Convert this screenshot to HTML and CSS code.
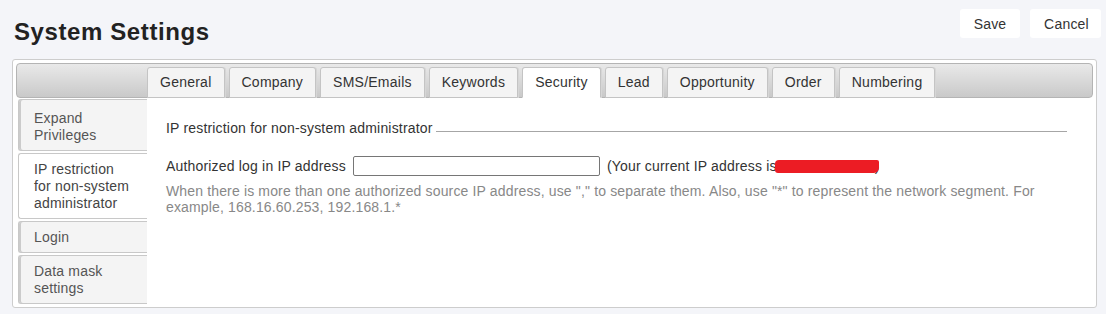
FILE: index.html
```html
<!DOCTYPE html>
<html lang="en">

<head>
    <meta charset="UTF-8">
    <title>System Settings</title>
    <link rel="stylesheet" href="styles.css">
</head>

<body>
    <div class="topbar">
        <h1 class="title">System Settings</h1>
        <div class="actions">
            <button class="btn btn-save">Save</button>
            <button class="btn btn-cancel">Cancel</button>
        </div>
    </div>

    <div class="panel">
        <div class="tabbar">
            <ul class="tabs">
                <li class="tab">General</li>
                <li class="tab">Company</li>
                <li class="tab">SMS/Emails</li>
                <li class="tab">Keywords</li>
                <li class="tab active">Security</li>
                <li class="tab">Lead</li>
                <li class="tab">Opportunity</li>
                <li class="tab">Order</li>
                <li class="tab">Numbering</li>
            </ul>
        </div>

        <div class="panel-body">
            <ul class="side-tabs">
                <li class="side-tab first">Expand<br>Privileges</li>
                <li class="side-tab active">IP restriction<br>for non-system<br>administrator</li>
                <li class="side-tab">Login</li>
                <li class="side-tab">Data mask<br>settings</li>
            </ul>

            <div class="content">
                <div class="legend">
                    <span class="legend-text">IP restriction for non-system administrator</span>
                    <span class="legend-line"></span>
                </div>

                <div class="field-row">
                    <label for="ip-address">Authorized log in IP address</label>
                    <input type="text" id="ip-address">
                    <span class="current-ip">(Your current IP address is<span class="masked"></span>)</span>
                </div>

                <p class="help">When there is more than one authorized source IP address, use "," to separate them. Also, use "*" to represent the network segment. For example, 168.16.60.253, 192.168.1.*</p>
            </div>
        </div>
    </div>
</body>

</html>
```

FILE: styles.css
```css
* {
    margin: 0;
    padding: 0;
    box-sizing: border-box;
}

body {
    font-family: 'Liberation Sans', Arial, sans-serif;
    font-size: 14px;
    letter-spacing: 0.18px;
    background-color: #f4f5f9;
    color: #333;
    width: 1106px;
    height: 314px;
    overflow: hidden;
}

ul {
    list-style: none;
}

.topbar {
    display: flex;
    justify-content: space-between;
    align-items: flex-start;
    height: 59px;
    padding: 9px 5px 0 14px;
}

.title {
    margin-top: 9px;
    font-size: 24px;
    line-height: 28px;
    font-weight: bold;
    letter-spacing: 0.6px;
    color: #222;
}

.actions {
    display: flex;
    gap: 10px;
}

.btn {
    height: 29px;
    border: none;
    border-radius: 3px;
    background-color: #fff;
    color: #333;
    font-family: 'Liberation Sans', Arial, sans-serif;
    font-size: 14px;
    letter-spacing: 0.2px;
    cursor: pointer;
}

.btn-save {
    width: 60px;
}

.btn-cancel {
    width: 71px;
    padding-left: 2px;
}

.panel {
    margin: 0 9px 0 12px;
    height: 249px;
    padding: 3px;
    border: 1px solid #cdcdcd;
    border-radius: 3px;
    background-color: #fff;
    display: flex;
    flex-direction: column;
}

.tabbar {
    height: 36px;
    border: 1px solid #b4b4b4;
    border-radius: 4px;
    background: linear-gradient(to bottom, #e9e9e9, #c9c9c9);
    padding-left: 130px;
    display: flex;
    align-items: flex-end;
}

.tabs {
    display: flex;
    gap: 4px;
    margin-bottom: -1px;
}

.tab {
    height: 31px;
    padding: 0 12px;
    line-height: 29px;
    letter-spacing: 0.24px;
    border: 1px solid #c4c4c4;
    border-radius: 3px 3px 0 0;
    background-color: #f4f4f4;
    box-shadow: 1px 0 0 #d6d6d6;
    color: #333;
}

.tab.active {
    background-color: #fff;
    border-bottom-color: #fff;
}

.panel-body {
    flex: 1;
    display: flex;
}

.side-tabs {
    width: 131px;
    padding: 1px 0 0 2px;
    display: flex;
    flex-direction: column;
    gap: 2px;
}

.side-tab {
    padding: 7px 0 6px 15px;
    line-height: 17px;
    border: 1px solid #c8c8c8;
    border-right: none;
    border-radius: 3px 0 0 3px;
    background-color: #f4f4f4;
    box-shadow: inset 2px 0 0 #cbcbcb;
    color: #555;
}

.side-tab.first {
    padding-top: 10px;
}

.side-tab.active {
    background-color: #fff;
    box-shadow: none;
    color: #444;
}

.content {
    flex: 1;
    padding: 22px 26px 0 19px;
}

.legend {
    display: flex;
    align-items: flex-start;
    line-height: 17px;
}

.legend-line {
    flex: 1;
    margin: 11px 0 0 3px;
    border-top: 1px solid #a6a6a6;
}

.field-row {
    display: flex;
    align-items: center;
    margin-top: 19px;
    height: 20px;
    line-height: 17px;
}

.field-row input {
    width: 247px;
    height: 20px;
    margin: 0 7px;
    border: 1px solid #767676;
    border-radius: 2px;
    outline: none;
}

.current-ip {
    display: flex;
    align-items: center;
}

.masked {
    display: inline-block;
    width: 104px;
    height: 13px;
    margin-left: -2px;
    margin-right: -4px;
    background-color: #ec1c24;
    border-radius: 4px 2px 5px 3px;
    position: relative;
}

.help {
    margin-top: 7px;
    line-height: 16px;
    color: #888;
    letter-spacing: 0.15px;
    max-width: 901px;
}
```
